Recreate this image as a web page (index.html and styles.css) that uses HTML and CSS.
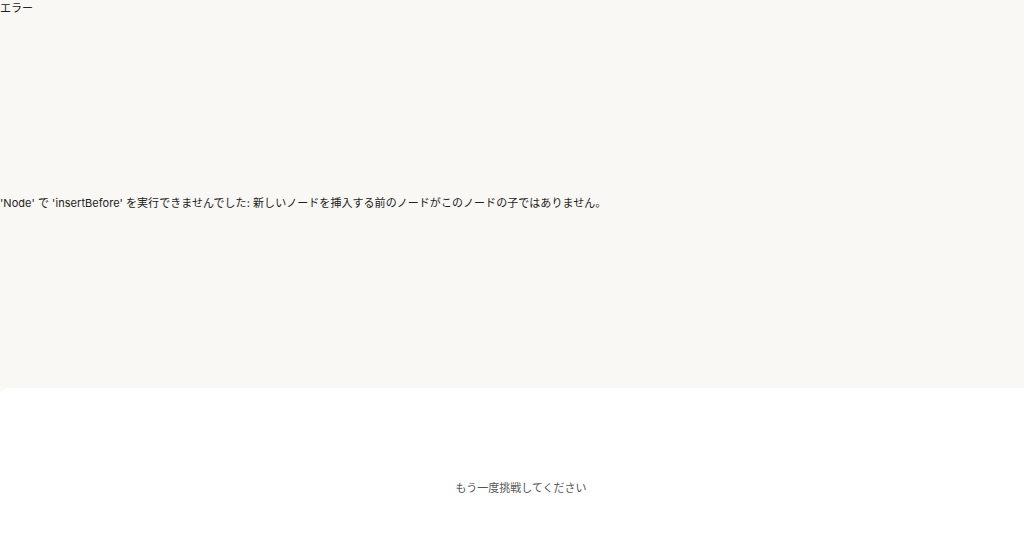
FILE: index.html
```html
<!DOCTYPE html>
<html lang="ja">
<head>
<meta charset="utf-8">
<title>エラー</title>
<link rel="stylesheet" href="styles.css">
</head>
<body>
<div class="page">
  <section class="error-area">
    <div class="error-title">エラー</div>
    <div class="error-message">'Node' で 'insertBefore' を実行できませんでした: 新しいノードを挿入する前のノードがこのノードの子ではありません。</div>
  </section>
  <section class="retry-panel">
    <div class="retry-text">もう一度挑戦してください</div>
  </section>
</div>
</body>
</html>
```

FILE: styles.css
```css
html, body {
  margin: 0;
  padding: 0;
  height: 100%;
  overflow: hidden;
}
body {
  background: #f9f8f4;
  font-family: Inter, "Noto Sans CJK JP", sans-serif;
  font-size: 11px;
  color: #222222;
}
.page {
  display: flex;
  flex-direction: column;
  height: 100%;
}
.error-area {
  height: 388px;
  flex: none;
  display: flex;
  flex-direction: column;
}
.error-title {
  line-height: 16px;
}
.error-message {
  margin-top: 179px;
  line-height: 16px;
  letter-spacing: 0.05px;
}
.retry-panel {
  flex: 1;
  background: #ffffff;
  border-top-left-radius: 8px;
  display: flex;
  align-items: flex-start;
  justify-content: center;
  padding-top: 92px;
  padding-left: 18px;
}
.retry-text {
  color: #555555;
  line-height: 16px;
}
```
